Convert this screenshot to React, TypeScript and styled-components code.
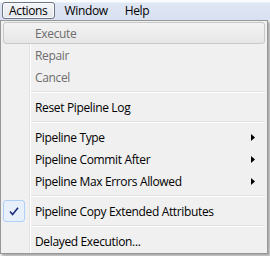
import React from 'react';
import styled, { createGlobalStyle } from 'styled-components';

const GlobalStyle = createGlobalStyle`
  body {
    margin: 0;
    background: #6b7484;
    font-family: 'Open Sans', 'Noto Sans', sans-serif;
    font-size: 12px;
    letter-spacing: -0.35px;
  }
`;

interface Item {
  label?: string;
  disabled?: boolean;
  hover?: boolean;
  checked?: boolean;
  submenu?: boolean;
  separator?: boolean;
}

const items: Item[] = [
  { label: 'Execute', disabled: true, hover: true },
  { label: 'Repair', disabled: true },
  { label: 'Cancel', disabled: true },
  { separator: true },
  { label: 'Reset Pipeline Log' },
  { separator: true },
  { label: 'Pipeline Type', submenu: true },
  { label: 'Pipeline Commit After', submenu: true },
  { label: 'Pipeline Max Errors Allowed', submenu: true },
  { separator: true },
  { label: 'Pipeline Copy Extended Attributes', checked: true },
  { separator: true },
  { label: 'Delayed Execution...' },
];

const App: React.FC = () => {
  return (
    <Page>
      <GlobalStyle />
      <MenuBar>
        <BarItem active>Actions</BarItem>
        <BarItem>Window</BarItem>
        <BarItem>Help</BarItem>
      </MenuBar>
      <Dropdown>
        {items.map((item, i) =>
          item.separator ? (
            <Separator key={i} />
          ) : (
            <MenuItem key={i} hover={item.hover} disabled={item.disabled}>
              {item.checked && (
                <CheckBox>
                  <svg width="10" height="9" viewBox="0 0 10 9">
                    <path
                      d="M1 4.5 L3.6 7.5 L9 0.8"
                      fill="none"
                      stroke="#1c2e7a"
                      strokeWidth="1.6"
                    />
                  </svg>
                </CheckBox>
              )}
              <Label>{item.label}</Label>
              {item.submenu && (
                <Arrow width="4" height="7" viewBox="0 0 4 7">
                  <path d="M0 0 L4 3.5 L0 7 Z" fill="#000" />
                </Arrow>
              )}
            </MenuItem>
          )
        )}
      </Dropdown>
    </Page>
  );
};

const Page = styled.div`
  width: 270px;
  height: 256px;
  overflow: hidden;
  background: #f0f0f0;
`;

const MenuBar = styled.div`
  display: flex;
  align-items: center;
  height: 20px;
  padding-left: 2px;
  gap: 3px;
  background: linear-gradient(#fafbfd 0px, #fafbfd 2px, #dfe6f4 3px, #d9e1f1 20px);
`;

const BarItem = styled.div<{ active?: boolean }>`
  height: 17px;
  line-height: 16px;
  padding: 0 6px;
  box-sizing: border-box;
  color: #000;
  border-radius: 3px;
  border: 1px solid ${(p) => (p.active ? '#6d7584' : 'transparent')};
  background: ${(p) =>
    p.active ? 'linear-gradient(#f4f5f8, #e3e6ec)' : 'transparent'};
  box-shadow: ${(p) => (p.active ? 'inset 0 0 0 1px #fbfcfd' : 'none')};
`;

const Dropdown = styled.div`
  width: 268px;
  box-sizing: border-box;
  border: 1px solid #979797;
  padding: 1px 2px;
  background: linear-gradient(
    to right,
    #f0f0f0 28px,
    #e2e3e3 28px,
    #e2e3e3 29px,
    #ffffff 29px,
    #ffffff 30px,
    #f0f0f0 30px
  );
  box-shadow: 2px 2px 2px rgba(0, 0, 0, 0.3);
`;

const MenuItem = styled.div<{ hover?: boolean; disabled?: boolean }>`
  position: relative;
  display: flex;
  align-items: center;
  height: 22px;
  box-sizing: border-box;
  padding-left: 32px;
  padding-right: 8px;
  border-radius: 3px;
  color: ${(p) => (p.disabled ? '#6d6d6d' : '#000')};
  border: 1px solid ${(p) => (p.hover ? '#c8c8c8' : 'transparent')};
  background: ${(p) =>
    p.hover ? 'linear-gradient(#f3f3f3, #e6e6e6)' : 'transparent'};
`;

const Label = styled.span`
  flex: 1;
  white-space: nowrap;
  margin-left: -1px;
`;

const Arrow = styled.svg`
  margin-right: 1px;
`;

const CheckBox = styled.div`
  position: absolute;
  left: -1px;
  top: -1px;
  width: 22px;
  height: 22px;
  box-sizing: border-box;
  display: flex;
  align-items: center;
  justify-content: center;
  border: 1px solid #aecff7;
  border-radius: 3px;
  background: #e8f0fb;
`;

const Separator = styled.div`
  height: 8px;
  margin-left: 28px;
  display: flex;
  flex-direction: column;
  justify-content: center;
  &::before {
    content: '';
    display: block;
    height: 1px;
    background: #e0e0e0;
  }
  &::after {
    content: '';
    display: block;
    height: 1px;
    background: #ffffff;
  }
`;

export default App;
